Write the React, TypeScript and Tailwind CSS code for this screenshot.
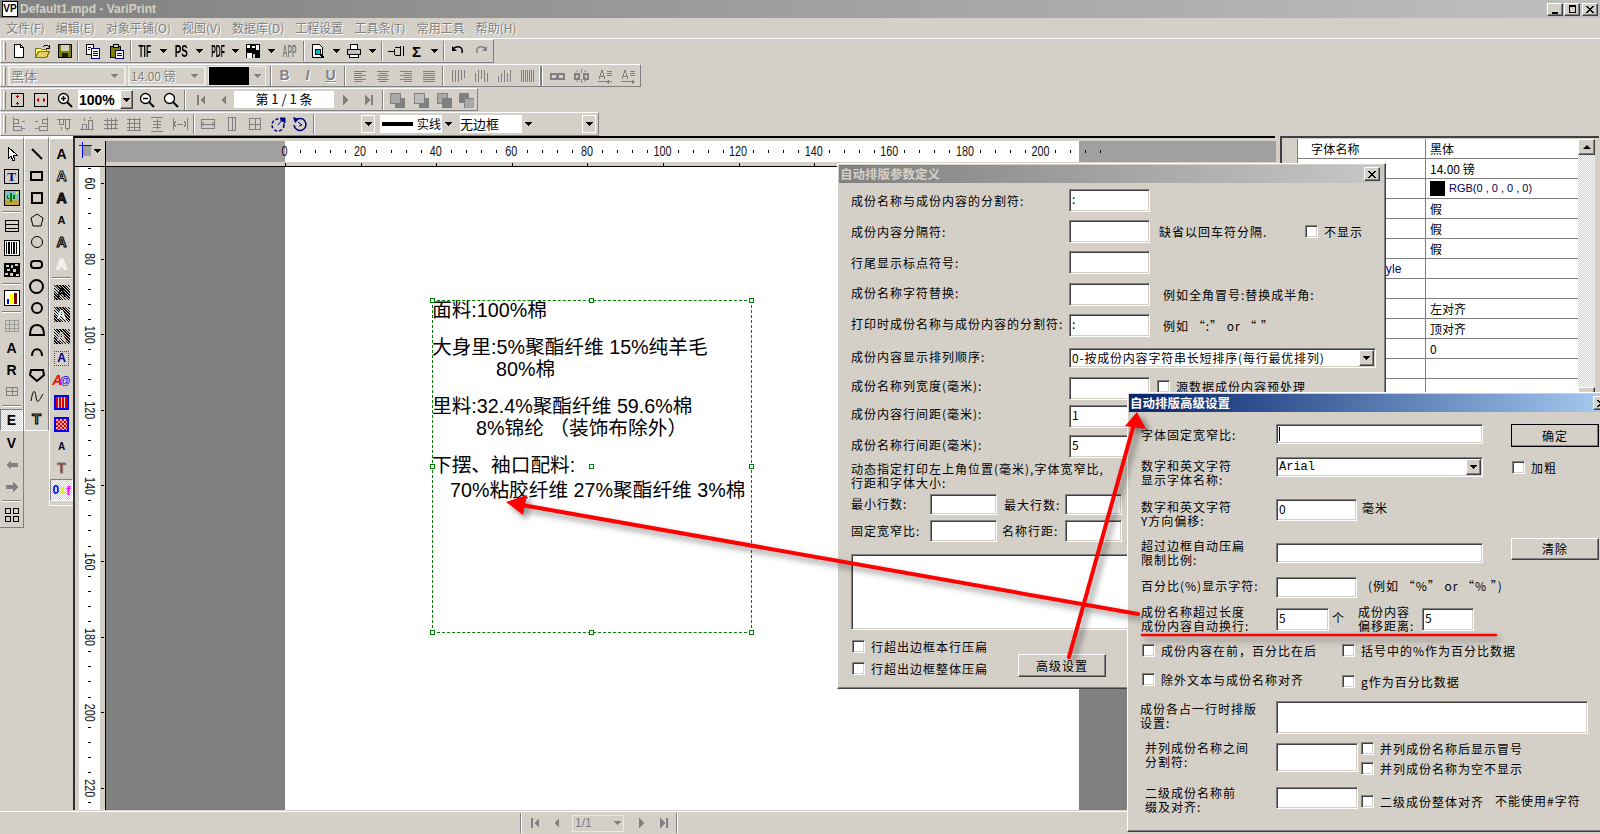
import React from 'react';

const sunken =
  'bg-white border border-t-[#808080] border-l-[#808080] border-r-white border-b-white shadow-[inset_1px_1px_0_#404040,inset_-1px_-1px_0_#d4d0c8]';
const raised =
  'bg-[#d4d0c8] border border-t-white border-l-white border-r-[#404040] border-b-[#404040] shadow-[inset_-1px_-1px_0_#808080]';
const dis = 'text-[#808080] [text-shadow:1px_1px_0_#fff]';
const latin = "[font-family:'Liberation_Sans','Noto_Sans_CJK_SC',sans-serif]";

const Px: React.FC<{ children: React.ReactNode; w?: number; h?: number; crisp?: boolean }> = ({ children, w = 16, h = 16, crisp = true }) => (
  <svg width={w} height={h} viewBox={`0 0 ${w} ${h}`} shapeRendering={crisp ? 'crispEdges' : 'auto'} fill="none">
    {children}
  </svg>
);

const Line: React.FC<{ d: string; c?: string; sw?: number }> = ({ d, c = '#808080', sw = 1 }) => (
  <Px>
    <path d={d} stroke={c} strokeWidth={sw} />
  </Px>
);

const Down: React.FC<{ c?: string }> = ({ c = '#000' }) => (
  <svg width="7" height="4" viewBox="0 0 7 4" shapeRendering="crispEdges">
    <path d="M0 0h7v1h-1v1h-1v1h-1v1h-1v-1h-1v-1h-1v-1h-1z" fill={c} />
  </svg>
);

const Tool: React.FC<{ className?: string; children?: React.ReactNode }> = ({ className = 'w-[23px]', children }) => (
  <div className={`flex h-[20px] shrink-0 items-center justify-center ${className}`}>{children}</div>
);

const Sep: React.FC<{ className?: string }> = ({ className = '' }) => (
  <div className={`h-[20px] w-[2px] shrink-0 border-l border-l-[#808080] border-r border-r-white ${className}`} />
);

const Bar: React.FC<{ className: string; children: React.ReactNode }> = ({ className, children }) => (
  <div className={`flex items-center border-t border-t-white border-b border-b-[#808080] border-r border-r-[#808080] border-l border-l-white ${className}`}>
    <div className="ml-[2px] h-[18px] w-[3px] shrink-0 border-l border-l-white border-r border-r-[#808080] bg-[#d4d0c8]" />
    {children}
  </div>
);

const Narrow: React.FC<{ children: React.ReactNode; c: string }> = ({ children, c }) => (
  <span className={`inline-block text-[17px] leading-none font-bold ${latin} ${c}`}>{children}</span>
);

const Toolbars = () => (
  <div className="h-[98px] shrink-0 border-t border-t-white">
    {/* row 1 */}
    <Bar className="h-[24px] w-[494px]">
      <Tool className="ml-[1px] w-[23px]">
        <Px>
          <path d="M3.5 1.5h6l3 3v10h-9z" fill="#fff" stroke="#000" />
          <path d="M9.5 1.5v3h3" stroke="#000" />
        </Px>
      </Tool>
      <Tool>
        <Px>
          <path d="M1.5 5.5h5l1 1h5v8h-11z" fill="#ffff80" stroke="#808000" />
          <path d="M1.5 14.5l3-6h11l-3 6z" fill="#e8d060" stroke="#808000" />
          <path d="M9 4l2-2h2l2 2M15 2v3h-3" stroke="#000" />
        </Px>
      </Tool>
      <Tool>
        <Px>
          <path d="M1.5 1.5h13v13h-13z" fill="#808000" stroke="#000" />
          <path d="M4 2h8v6h-8z" fill="#d4d0c8" />
          <path d="M5 10h6v4h-6z" fill="#202000" />
        </Px>
      </Tool>
      <Sep className="ml-[1px]" />
      <Tool className="ml-[2px] w-[23px]">
        <Px>
          <path d="M1.5 1.5h7v10h-7z" fill="#fff" stroke="#000" />
          <path d="M6.5 5.5h8v10h-8z" fill="#fff" stroke="#000080" />
          <path d="M8 8h5M8 10h5M8 12h5M3 4h3M3 6h2" stroke="#000080" />
        </Px>
      </Tool>
      <Tool>
        <Px>
          <path d="M2.5 3.5h10v11h-10z" fill="#808000" stroke="#000" />
          <path d="M5 1.5h5v3h-5z" fill="#d4d0c8" stroke="#000" />
          <path d="M7.5 7.5h8v8h-8z" fill="#fff" stroke="#000080" />
          <path d="M9 10h5M9 12h5" stroke="#000080" />
        </Px>
      </Tool>
      <Sep className="ml-[3px]" />
      <Tool className="ml-[1px] w-[23px]"><Narrow c="scale-x-[0.5] text-black">TIF</Narrow></Tool>
      <Tool className="w-[14px]"><Down /></Tool>
      <Tool className="w-[23px]"><Narrow c="scale-x-[0.58] text-black">PS</Narrow></Tool>
      <Tool className="w-[13px]"><Down /></Tool>
      <Tool className="w-[24px]"><Narrow c="scale-x-[0.4] text-black">PDF</Narrow></Tool>
      <Tool className="w-[11px]"><Down /></Tool>
      <Tool className="w-[24px]">
        <Px>
          <path d="M1 1h14v14h-14z" fill="#000" />
          <path d="M2 2h3v3h-3zM7 3h3v2h-3zM11 2h3v5h-3zM2 10h5v5h-5z" fill="#fff" />
          <path d="M8 11h2v4h-2z" fill="#d4d0c8" />
        </Px>
      </Tool>
      <Tool className="w-[12px]"><Down /></Tool>
      <Tool className="w-[24px]"><Narrow c="scale-x-[0.4] text-[#808080]">APP</Narrow></Tool>
      <Sep className="ml-[2px]" />
      <Tool className="ml-[1px] w-[24px]">
        <Px>
          <path d="M2.5 1.5h7l3 3v10h-10z" fill="#fff" stroke="#000" />
          <circle cx="8" cy="9" r="3" fill="#00c0c0" stroke="#000" />
          <path d="M10 11l4 4" stroke="#000" strokeWidth="2" />
        </Px>
      </Tool>
      <Tool className="w-[12px]"><Down /></Tool>
      <Tool className="w-[24px]">
        <Px>
          <path d="M4.5 1.5h7v5h-7z" fill="#fff" stroke="#000" />
          <path d="M1.5 6.5h13v5h-13z" fill="#c0c0c0" stroke="#000" />
          <path d="M3.5 11.5h9v3h-9z" fill="#fff" stroke="#000" />
          <path d="M11 8h2" stroke="#ff0" />
        </Px>
      </Tool>
      <Tool className="w-[12px]"><Down /></Tool>
      <Sep className="ml-[3px]" />
      <Tool className="ml-[1px] w-[23px]">
        <Px>
          <path d="M0 8h6M6.5 5.5v6M6.5 4.5h6v8h-6M12.5 3v10M15 3v10" stroke="#000" />
        </Px>
      </Tool>
      <Tool className="w-[19px]">
        <span className={`text-[15px] font-bold leading-none ${latin}`}>Σ</span>
      </Tool>
      <Tool className="w-[16px]"><Down /></Tool>
      <Sep className="ml-[1px]" />
      <Tool className="ml-[1px] w-[23px]">
        <Px crisp={false}>
          <path d="M4 5c6-3 9 0 8 5" stroke="#000" strokeWidth="1.5" />
          <path d="M2 3v5h5z" fill="#000" />
        </Px>
      </Tool>
      <Tool className="w-[24px]">
        <Px crisp={false}>
          <path d="M12 5c-6-3-9 0-8 5" stroke="#808080" strokeWidth="1.5" />
          <path d="M14 3v5h-5z" fill="#808080" />
        </Px>
      </Tool>
    </Bar>

    {/* row 2 */}
    <Bar className="mt-[1px] h-[23px] w-[641px]">
      <div className={`ml-[2px] flex h-[20px] w-[118px] shrink-0 items-center justify-between border-2 border-[#eceae4] pl-[1px] pr-[6px] text-[13px] ${dis}`}>
        黑体<Down c="#808080" />
      </div>
      <div className={`ml-[2px] flex h-[20px] w-[78px] shrink-0 items-center justify-between border-2 border-[#eceae4] pl-[1px] pr-[6px] text-[12px] ${dis}`}>
        14.00 镑<Down c="#808080" />
      </div>
      <div className="ml-[2px] flex h-[20px] w-[58px] shrink-0 items-center border border-[#eceae4]">
        <div className="h-[18px] w-[40px] bg-black" />
        <div className="flex flex-1 justify-center"><Down c="#808080" /></div>
      </div>
      <Sep className="ml-[4px]" />
      <Tool className="ml-[1px] w-[23px]"><span className={`text-[14px] font-bold ${latin} ${dis}`}>B</span></Tool>
      <Tool><span className={`text-[14px] font-bold italic ${latin} ${dis}`}>I</span></Tool>
      <Tool><span className={`text-[14px] font-bold underline ${latin} ${dis}`}>U</span></Tool>
      <Sep className="ml-[2px]" />
      <Tool className="ml-[2px] w-[23px]"><Line d="M2 3h12M2 5h8M2 7h12M2 9h8M2 11h12M2 13h8" /></Tool>
      <Tool><Line d="M2 3h12M4 5h8M2 7h12M4 9h8M2 11h12M4 13h8" /></Tool>
      <Tool><Line d="M2 3h12M6 5h8M2 7h12M6 9h8M2 11h12M6 13h8" /></Tool>
      <Tool><Line d="M2 3h12M2 5h12M2 7h12M2 9h12M2 11h12M2 13h12" /></Tool>
      <Sep className="ml-[2px]" />
      <Tool className="ml-[2px] w-[23px]"><Line d="M2 2v12M5 2v12M8 2v12M11 2v10M14 2v8" /></Tool>
      <Tool><Line d="M2 5v9M5 2v12M8 2v9M11 2v12M14 5v9" /></Tool>
      <Tool><Line d="M2 8v6M5 5v9M8 2v12M11 5v9M14 2v12" /></Tool>
      <Tool><Line d="M2 2v12M4 2v12M6 2v12M8 2v12M10 2v12M12 2v12M14 2v12" /></Tool>
      <div className="ml-[1px] h-[20px] w-[4px] shrink-0 border-x border-x-white bg-[#808080]" />
      <Tool className="ml-[2px] w-[24px]">
        <Px>
          <path d="M1.5 5.5h6v5h-6zM8.5 5.5h6v5h-6z" stroke="#808080" strokeWidth="2" />
        </Px>
      </Tool>
      <Tool className="w-[24px]">
        <Px>
          <path d="M1.5 5.5h4v5h-4zM10.5 5.5h4v5h-4z" stroke="#808080" strokeWidth="2" />
          <path d="M8 1v4M8 11v4M3 2l2 2M13 2l-2 2M3 14l2-2M13 14l-2-2" stroke="#808080" />
        </Px>
      </Tool>
      <Tool>
        <Px>
          <path d="M2 11l3-9 3 9M3 8h4M10 3h5M10 5h5M10 7h5M1 13h14" stroke="#808080" />
          <path d="M9 14l3-2v4z" fill="#808080" />
        </Px>
      </Tool>
      <Tool className="w-[24px]">
        <Px>
          <path d="M2 11l3-9 3 9M3 8h4M10 3h5M10 5h5M10 7h5M1 13h14" stroke="#808080" />
          <path d="M15 14l-3-2v4z" fill="#808080" />
        </Px>
      </Tool>
    </Bar>

    {/* row 3 */}
    <Bar className="mt-[1px] h-[23px] w-[478px]">
      <Tool className="w-[23px]">
        <Px>
          <path d="M1.5 1.5h12v13h-12z" stroke="#000" />
          <path d="M7.5 3l2 2h-4zM7.5 13l2-2h-4z" fill="#c00000" />
          <path d="M7 5h1v1h-1zM7 10h1v1h-1z" fill="#000" />
        </Px>
      </Tool>
      <Tool className="w-[24px]">
        <Px>
          <path d="M1.5 1.5h13v13h-13z" stroke="#000" />
          <path d="M3 8l3-2v4zM13 8l-3-2v4z" fill="#c00000" />
        </Px>
      </Tool>
      <Tool>
        <Px crisp={false}>
          <circle cx="6.5" cy="6.5" r="5" fill="#fff" stroke="#000" strokeWidth="1.3" />
          <path d="M10 10l5 5" stroke="#000" strokeWidth="2" />
          <path d="M4 6.5h5M6.5 4v5" stroke="#000" strokeWidth="1.5" />
        </Px>
      </Tool>
      <div className="ml-[2px] flex h-[19px] w-[55px] shrink-0 items-center bg-white">
        <span className={`w-[42px] pl-[1px] text-[14px] leading-none font-bold ${latin}`}>100%</span>
        <div className={`flex h-full flex-1 items-center justify-center ${raised}`}><Down /></div>
      </div>
      <Tool className="ml-[2px] w-[24px]">
        <Px crisp={false}>
          <circle cx="6.5" cy="6.5" r="5" fill="#fff" stroke="#000" strokeWidth="1.3" />
          <path d="M10 10l5 5" stroke="#000" strokeWidth="2" />
          <path d="M4 6.5h5" stroke="#000" strokeWidth="1.5" />
        </Px>
      </Tool>
      <Tool>
        <Px crisp={false}>
          <circle cx="6.5" cy="6.5" r="5" fill="#fff" stroke="#000" strokeWidth="1.3" />
          <path d="M10 10l5 5" stroke="#000" strokeWidth="2" />
        </Px>
      </Tool>
      <Sep className="ml-[2px]" />
      <Tool className="ml-[3px] w-[23px]"><Px><path d="M4 3h2v10h-2zM12 3v10l-5-5z" fill="#808080" /></Px></Tool>
      <Tool className="w-[21px]"><Px><path d="M11 3v10l-5-5z" fill="#808080" /></Px></Tool>
      <div className="ml-[1px] flex h-[17px] w-[100px] shrink-0 items-center justify-center bg-white pb-[2px] text-[13px]">第 1 / 1 条</div>
      <Tool className="ml-[1px] w-[22px]"><Px><path d="M5 3v10l5-5z" fill="#808080" /></Px></Tool>
      <Tool><Px><path d="M4 3v10l5-5zM10 3h2v10h-2z" fill="#808080" /></Px></Tool>
      <Sep className="ml-[2px]" />
      <Tool className="ml-[1px] w-[24px]">
        <Px><path d="M6 6h10v10h-10z" fill="#808080" /><path d="M1 1h10v10h-10z" fill="#a8a8a8" stroke="#808080" /></Px>
      </Tool>
      <Tool>
        <Px><path d="M6 6h10v10h-10z" fill="#808080" /><path d="M1 1h10v10h-10z" fill="#bdbdbd" stroke="#808080" /></Px>
      </Tool>
      <Tool className="w-[24px]">
        <Px><path d="M1 1h10v10h-10z" fill="#a8a8a8" stroke="#808080" /><path d="M6 6h10v10h-10z" fill="#808080" /></Px>
      </Tool>
      <Tool className="w-[20px]">
        <Px><path d="M1 1h10v10h-10z" fill="#808080" /><path d="M6 6h10v10h-10z" fill="#a8a8a8" stroke="#808080" /></Px>
      </Tool>
    </Bar>

    {/* row 4 */}
    <Bar className="mt-[1px] h-[24px] w-[599px]">
      <Tool className="w-[24px]"><Line d="M3 1v14M3 3h5v4h-5M3 10h8v4h-8M12 5h3M12 12h3" /></Tool>
      <Tool><Line d="M13 1v14M13 3h-5v4h5M13 10h-8v4h8M1 5h3M1 12h3" /></Tool>
      <Tool className="w-[22px]"><Line d="M1 3h14M3 3v5h4v-5M9 3v9h4v-9M5 11v3M11 13v2" /></Tool>
      <Tool className="w-[24px]"><Line d="M1 13h14M3 13v-5h4v5M9 13v-9h4v9M5 5v-3M11 3v-2" /></Tool>
      <Tool><Line d="M4 2v12M8 2v12M12 2v12M1 4h14M1 8h14M1 12h14" /></Tool>
      <Tool><Line d="M3 2v12M8 2v12M13 2v12M1 3h14M1 7h14M1 11h14M1 14h14" /></Tool>
      <Tool><Line d="M2 1h12M2 15h12M8 3v10M4 5h8M4 8h8M4 11h8" /></Tool>
      <Tool className="w-[24px]"><Line d="M1 2v12M15 2v12M5 8h6M4 5l-2 3 2 3M12 5l2 3-2 3" /></Tool>
      <Sep className="ml-[1px]" />
      <Tool className="ml-[1px] w-[24px]"><Line d="M1.5 3.5h13v9h-13zM1.5 8h13M4 6l-2 2 2 2M12 6l2 2-2 2" /></Tool>
      <Tool><Line d="M4.5 1.5h7v13h-7zM8 1.5v13" /></Tool>
      <Tool className="w-[24px]"><Line d="M2.5 2.5h11v11h-11zM8 2.5v11M2.5 8h11" /></Tool>
      <Tool className="w-[21px]">
        <Px crisp={false}>
          <circle cx="8" cy="9" r="6" stroke="#000080" strokeWidth="1.5" strokeDasharray="3 2" />
          <path d="M8 9l6-7M10 2h5v5z" fill="#000080" stroke="#000080" />
        </Px>
      </Tool>
      <Tool className="w-[24px]">
        <Px crisp={false}>
          <path d="M4 4a6 6 0 1 1-2 5" stroke="#000080" strokeWidth="1.5" />
          <path d="M1 1l6 2-4 4z" fill="#000080" />
          <path d="M6 6l4 3-3 1" stroke="#000080" />
        </Px>
      </Tool>
      <Sep className="ml-[1px]" />
      <div className="ml-[46px] flex h-[18px] w-[14px] shrink-0 items-center justify-center border border-white"><Down /></div>
      <div className="ml-[5px] flex h-[18px] w-[75px] shrink-0 items-center bg-white pl-[2px]">
        <div className="h-[4px] w-[31px] bg-black" />
        <span className="ml-[4px] w-[25px] text-[12px] leading-none">实线</span>
        <div className="flex h-full flex-1 items-center justify-center bg-[#d4d0c8]"><Down /></div>
      </div>
      <div className="ml-[5px] flex h-[18px] w-[75px] shrink-0 items-center bg-white">
        <span className="w-[62px] pb-[2px] text-[13px] leading-none">无边框</span>
        <div className="flex h-full flex-1 items-center justify-center bg-[#d4d0c8]"><Down /></div>
      </div>
      <div className="ml-[47px] flex h-[18px] w-[14px] shrink-0 items-center justify-center border border-white"><Down /></div>
    </Bar>
  </div>
);

const Slot: React.FC<{ className?: string; children?: React.ReactNode }> = ({ className = '', children }) => (
  <div className={`flex h-[22px] w-full items-center justify-center ${className}`}>{children}</div>
);

const HSep = () => <div className="mx-[2px] my-[2px] h-[2px] border-t border-t-[#808080] border-b border-b-white" />;

const Big: React.FC<{ children: React.ReactNode; c?: string }> = ({ children, c = '' }) => (
  <span className={`text-[14px] leading-none font-bold ${latin} ${c}`}>{children}</span>
);

const Box: React.FC<{ children: React.ReactNode; c?: string }> = ({ children, c = 'border-black' }) => (
  <div className={`flex h-[15px] w-[15px] items-center justify-center overflow-hidden border-2 ${c}`}>{children}</div>
);

const StripeA: React.FC<{ c: string }> = ({ c }) => (
  <div className="flex h-[15px] w-[16px] items-center justify-center bg-[repeating-linear-gradient(45deg,#000_0,#000_1px,#d4d0c8_1px,#d4d0c8_2px)]">
    <span className={`text-[13px] leading-none font-bold ${latin} ${c}`}>A</span>
  </div>
);

const LeftTools = () => (
  <div className="flex w-[74px] shrink-0 items-start">
    <div className="h-[392px] w-[24px] shrink-0 border-t-[3px] border-t-white border-r border-r-[#808080] border-b border-b-[#808080] pt-[4px]">
      <Slot>
        <Px><path d="M4 1v12l3-3 2 5 2-1-2-5h4z" fill="#fff" stroke="#000" /></Px>
      </Slot>
      <Slot>
        <div className="flex h-[15px] w-[15px] items-center justify-center border border-black bg-[#d4d0c8]">
          <span className="text-[13px] leading-none font-bold text-[#000080] [font-family:'Liberation_Serif',serif]">T</span>
        </div>
      </Slot>
      <Slot>
        <Px>
          <path d="M0 0h16v16h-16z" fill="#000" />
          <path d="M1 1h14v14h-14z" fill="#80c0c0" />
          <path d="M1 10h14v5h-14z" fill="#c0a040" />
          <path d="M6 3h2v9h-2zM3 5h1v3h3v1h-4zM9 5h2v4h-2z" fill="#008000" />
          <path d="M12 2h2v2h-2z" fill="#ff0" />
        </Px>
      </Slot>
      <HSep />
      <Slot><Px><path d="M1.5 2.5h13v11h-13zM1.5 6h13M1.5 10h13" stroke="#000" /></Px></Slot>
      <Slot>
        <Px>
          <path d="M.5.5h15v15h-15z" fill="#fff" stroke="#000" />
          <path d="M2 2h1v12h-1zM4 2h2v12h-2zM7 2h1v12h-1zM9 2h2v12h-2zM12 2h1v12h-1z" fill="#000" />
        </Px>
      </Slot>
      <Slot>
        <Px>
          <path d="M0 1h16v14h-16z" fill="#000" />
          <path d="M2 3h3v2h-3zM7 3h2v3h-2zM11 2h3v2h-3zM3 7h3v2h-3zM9 7h3v3h-3zM1 11h3v2h-3zM6 11h3v3h-3zM12 12h3v2h-3z" fill="#d4d0c8" />
        </Px>
      </Slot>
      <HSep />
      <Slot>
        <Px>
          <path d="M.5.5h15v15h-15z" fill="#fff" stroke="#000" />
          <path d="M3 9h2v5h-2z" fill="#0000ff" />
          <path d="M6 4h3v10h-3z" fill="#ff0" />
          <path d="M10 3h3v11h-3z" fill="#800000" />
        </Px>
      </Slot>
      <HSep />
      <Slot><Px><path d="M1.5 2.5h13v11h-13zM5.5 2.5v11M10 2.5v11M1.5 6h13M1.5 10h13" stroke="#9a9a9a" /></Px></Slot>
      <Slot><Big>A</Big></Slot>
      <Slot><Big>R</Big></Slot>
      <Slot><Px><path d="M2.5 3.5h11v8h-11zM2.5 7.5h11M8 3.5v8" stroke="#808080" /></Px></Slot>
      <HSep />
      <Slot className="my-[1px] border border-t-[#808080] border-l-[#808080] border-r-white border-b-white bg-[repeating-conic-gradient(#fff_0_25%,#d4d0c8_0_50%)] bg-[length:2px_2px]">
        <Big>E</Big>
      </Slot>
      <Slot><Big>V</Big></Slot>
      <Slot><Px><path d="M2 8l5-5v3h7v4h-7v3z" fill="#808080" /></Px></Slot>
      <Slot><Px><path d="M14 8l-5-5v3h-7v4h7v3z" fill="#808080" /></Px></Slot>
      <HSep />
      <Slot><Px><path d="M1.5 1.5h5v5h-5zM9.5 1.5h5v5h-5zM1.5 9.5h5v5h-5zM9.5 9.5h5v5h-5z" stroke="#000" /></Px></Slot>
    </div>
    <div className="h-[295px] w-[25px] shrink-0 border-t-[3px] border-t-white border-r border-r-[#808080] border-b border-b-white border-l border-l-white pt-[4px]">
      <Slot><Px crisp={false}><path d="M3 3l10 10" stroke="#000" strokeWidth="2" /></Px></Slot>
      <Slot><div className="h-[10px] w-[13px] border-2 border-black" /></Slot>
      <Slot><div className="h-[12px] w-[12px] border-2 border-black" /></Slot>
      <Slot><Px crisp={false}><path d="M8 2l6 4-2 8h-8l-2-8z" stroke="#000" /></Px></Slot>
      <Slot><div className="h-[12px] w-[12px] rounded-full border border-black" /></Slot>
      <Slot><div className="h-[9px] w-[13px] rounded-[4px] border-2 border-black" /></Slot>
      <Slot><div className="h-[15px] w-[15px] rounded-full border-2 border-black" /></Slot>
      <Slot><div className="h-[12px] w-[12px] rounded-full border-2 border-black" /></Slot>
      <Slot><Px crisp={false}><path d="M1 13h14c0-8-3-10-7-10s-7 2-7 10z" stroke="#000" strokeWidth="2" /></Px></Slot>
      <Slot><Px crisp={false}><path d="M3 12c0-9 10-9 10 0" stroke="#000" strokeWidth="2" /></Px></Slot>
      <Slot><Px crisp={false}><path d="M2 4h12l1 5-7 6-7-6z" stroke="#000" strokeWidth="2" /></Px></Slot>
      <Slot><Px crisp={false}><path d="M2 13c2-12 4-12 5-4s3 4 7-3" stroke="#000" /></Px></Slot>
      <Slot><span className={`text-[15px] leading-none font-bold text-[#808080] [-webkit-text-stroke:1px_#000] ${latin}`}>T</span></Slot>
    </div>
    <div className="h-[370px] w-[25px] shrink-0 border-t-[3px] border-t-white border-r border-r-white border-b border-b-white border-l border-l-white pt-[4px]">
      <Slot><Big>A</Big></Slot>
      <Slot><Big c="text-white [-webkit-text-stroke:1px_#000]">A</Big></Slot>
      <Slot><Big c="text-[#333] [-webkit-text-stroke:1px_#000]">A</Big></Slot>
      <Slot><span className={`text-[11px] font-bold ${latin}`}>A</span></Slot>
      <Slot><Big c="text-[#aaa] [-webkit-text-stroke:1px_#000]">A</Big></Slot>
      <Slot><Big c="text-[#d4d0c8] [-webkit-text-stroke:1px_#fff]">A</Big></Slot>
      <HSep />
      <Slot><StripeA c="text-black" /></Slot>
      <Slot><StripeA c="text-white" /></Slot>
      <Slot><StripeA c="text-[#d4d0c8]" /></Slot>
      <Slot>
        <div className="flex h-[15px] w-[15px] items-center justify-center border border-dotted border-[#c000c0]">
          <span className={`text-[12px] leading-none font-bold text-[#000080] ${latin}`}>A</span>
        </div>
      </Slot>
      <Slot>
        <span className={`text-[14px] leading-none font-bold italic text-[#ff0000] ${latin}`}>A</span>
        <span className={`-ml-[3px] text-[11px] leading-none text-[#0000ff] ${latin}`}>@</span>
      </Slot>
      <Slot>
        <Box c="border-[#0000ff]">
          <div className="h-full w-full bg-[repeating-linear-gradient(90deg,#e00000_0,#e00000_2px,#d4d0c8_2px,#d4d0c8_3px)]" />
        </Box>
      </Slot>
      <Slot>
        <Box c="border-[#0000ff]">
          <div className="h-full w-full bg-[repeating-conic-gradient(#e00000_0_25%,#ffb0b0_0_50%)] bg-[length:4px_4px]" />
        </Box>
      </Slot>
      <Slot><span className={`text-[10px] font-bold text-[#000040] ${latin}`}>A</span></Slot>
      <Slot><Big c="text-[#e00000] [-webkit-text-stroke:1px_#808080]">T</Big></Slot>
      <Slot className="border border-t-[#808080] border-l-[#808080] border-r-white border-b-white bg-[repeating-conic-gradient(#fff_0_25%,#d4d0c8_0_50%)] bg-[length:2px_2px]">
        <span className={`text-[12px] leading-none font-bold text-[#0000ff] ${latin}`}>0</span>
        <span className={`ml-[1px] text-[9px] leading-none font-bold text-[#e0e000] ${latin}`}>1</span>
        <span className={`ml-[1px] text-[13px] leading-none font-bold text-[#ff00ff] ${latin}`}>f</span>
      </Slot>
    </div>
  </div>
);

const ticksH = Array.from({ length: 55 }, (_, i) => i).filter((i) => i % 5 !== 0);
const labelsH = [0, 20, 40, 60, 80, 100, 120, 140, 160, 180, 200];
const labelsV = [60, 80, 100, 120, 140, 160, 180, 200, 220];

const RulerH = () => (
  <svg width="1170" height="25" className="block" shapeRendering="auto">
    <rect width="1170" height="21" fill="#a0a0a0" />
    <rect x="179" width="794" height="21" fill="#fff" />
    {ticksH.map((i) => (
      <rect key={i} x={Math.round(179 + i * 15.1)} y="9" width="1" height="3" fill="#000" />
    ))}
    {labelsH.map((n, i) => (
      <g key={n}>
        <rect x={Math.round(179 + i * 75.6)} y="22" width="1" height="3" fill="#000" />
        <text x={178.5 + i * 75.6} y="15" fontSize="14" textAnchor="middle" textLength={String(n).length * 6} lengthAdjust="spacingAndGlyphs" fontFamily="'Liberation Sans', sans-serif" fill="#111">
          {n}
        </text>
      </g>
    ))}
  </svg>
);

const RulerV = () => (
  <svg width="30" height="643" className="block shrink-0">
    <rect x="4" width="21" height="643" fill="#fff" />
    {Array.from({ length: 43 }, (_, i) => i).map((i) => (
      <rect key={i} x="13" y={Math.round(1 + i * 15.1)} width="3" height="1" fill="#000" />
    ))}
    {labelsV.map((n, i) => (
      <g key={n}>
        <rect x="26" y={Math.round(16 + i * 75.6)} width="3" height="1" fill="#000" />
        <rect x="11" y={Math.round(8 + i * 75.6)} width="8" height="17" fill="#fff" />
        <text transform={`translate(10 ${16.5 + i * 75.6}) rotate(90)`} fontSize="14" textAnchor="middle" textLength={String(n).length * 6} lengthAdjust="spacingAndGlyphs" fontFamily="'Liberation Sans', sans-serif" fill="#111">
          {n}
        </text>
      </g>
    ))}
  </svg>
);

const Handle: React.FC<{ className: string }> = ({ className }) => (
  <div className={`absolute h-[5px] w-[5px] border border-[#008000] bg-white ${className}`} />
);

const TextFrame = () => (
  <div className={`absolute top-[133px] left-[147px] h-[333px] w-[320px] border border-dashed border-[#008000] text-[19.7px] leading-[22px] text-black ${latin}`}>
    <Handle className="-top-[3px] -left-[3px]" />
    <Handle className="-top-[3px] left-[156px]" />
    <Handle className="-top-[3px] -right-[3px]" />
    <Handle className="top-[163px] -left-[3px]" />
    <Handle className="top-[163px] left-[156px]" />
    <Handle className="top-[163px] -right-[3px]" />
    <Handle className="-bottom-[3px] -left-[3px]" />
    <Handle className="-bottom-[3px] left-[156px]" />
    <Handle className="-bottom-[3px] -right-[3px]" />
    <div className="-mt-[2px] -ml-[1px] whitespace-nowrap">
      <p>面料:100%棉</p>
      <p className="mt-[15px]">大身里:5%聚酯纤维 15%纯羊毛</p>
      <p className="pl-[64px]">80%棉</p>
      <p className="mt-[15px]">里料:32.4%聚酯纤维 59.6%棉</p>
      <p className="pl-[44px]">8%锦纶 （装饰布除外）</p>
      <p className="mt-[15px]">下摆、袖口配料:</p>
      <p className="mt-[3px] pl-[18px]">70%粘胶纤维 27%聚酯纤维 3%棉</p>
    </div>
  </div>
);

const propRows: { name?: string; value?: React.ReactNode }[] = [
  { name: '字体名称', value: '黑体' },
  { value: '14.00 镑' },
  {
    value: (
      <span className="flex items-center gap-[4px]">
        <span className="h-[15px] w-[15px] bg-black" />
        <span className={`text-[11px] text-[#000050] ${latin}`}>RGB(0 , 0 , 0 , 0)</span>
      </span>
    ),
  },
  { value: '假' },
  { value: '假' },
  { value: '假' },
  { name: 'Style' },
  {},
  { value: '左对齐' },
  { value: '顶对齐' },
  { value: '0' },
  {},
  {},
];

const PropPanel = () => (
  <div className="ml-[5px] flex h-[270px] w-[319px] shrink-0 border-t-[2px] border-t-[#404040] border-l-[2px] border-l-[#404040] pt-[1px] pl-[2px]">
    <div className="w-[14px] shrink-0 border-r border-r-[#808080]" />
    <div className="w-[280px] shrink-0 bg-white">
      {propRows.map((r, i) => (
        <div key={i} className="flex h-[20px] border-b border-b-[#808080]">
          <div className={`w-[128px] shrink-0 border-r border-r-[#808080] pt-[1px] text-[12px] tracking-[0.2px] ${i === 6 ? `pl-[76px] text-[#000080] ${latin}` : 'pl-[13px]'}`}>{r.name}</div>
          <div className="flex flex-1 items-center pl-[4px] text-[12px]">{r.value}</div>
        </div>
      ))}
    </div>
    <div className="flex w-[17px] shrink-0 flex-col bg-[repeating-conic-gradient(#fff_0_25%,#d4d0c8_0_50%)] bg-[length:2px_2px] pb-[3px]">
      <div className={`flex h-[16px] items-center justify-center ${raised}`}>
        <span className="h-0 w-0 border-x-[4px] border-b-[4px] border-x-transparent border-b-black" />
      </div>
      <div className={`mt-auto flex h-[16px] items-center justify-center ${raised}`}>
        <Down />
      </div>
    </div>
  </div>
);

const Check = () => <div className={`h-[13px] w-[13px] shrink-0 ${sunken}`} />;

const Field: React.FC<{ className: string; children?: React.ReactNode }> = ({ className, children }) => (
  <div className={`shrink-0 overflow-hidden pl-[2px] text-[12px] leading-[17px] tracking-normal ${sunken} ${className}`}>{children}</div>
);

const CloseBtn: React.FC<{ className: string }> = ({ className }) => (
  <div className={`flex items-center justify-center ${raised} ${className}`}>
    <svg width="8" height="7" viewBox="0 0 8 7" shapeRendering="crispEdges">
      <path d="M0 0h2v1h1v1h2v-1h1v-1h2v1h-1v1h-1v1h-1v1h1v1h1v1h1v1h-2v-1h-1v-1h-2v1h-1v1h-2v-1h1v-1h1v-1h1v-1h-1v-1h-1v-1h-1z" fill="#000" />
    </svg>
  </div>
);

const Row: React.FC<{ className: string; children: React.ReactNode }> = ({ className, children }) => (
  <div className={`flex items-center ${className}`}>{children}</div>
);

const CheckLabel: React.FC<{ children: React.ReactNode; className?: string }> = ({ children, className = '' }) => (
  <div className={`flex items-center gap-[6px] ${className}`}>
    <Check />
    <span className="whitespace-nowrap leading-[13px]">{children}</span>
  </div>
);

const DialogBody = () => (
  <div className="pl-[13px]">
    <Row className="mt-[6px]"><span className="w-[218px]">成份名称与成份内容的分割符:</span><Field className="h-[23px] w-[81px]">:</Field></Row>
    <Row className="mt-[8px]">
      <span className="w-[218px]">成份内容分隔符:</span>
      <Field className="h-[23px] w-[81px]" />
      <span className="ml-[9px] w-[146px] whitespace-nowrap">缺省以回车符分隔.</span>
      <CheckLabel>不显示</CheckLabel>
    </Row>
    <Row className="mt-[8px]"><span className="w-[218px]">行尾显示标点符号:</span><Field className="h-[23px] w-[81px]" /></Row>
    <Row className="mt-[9px]">
      <span className="w-[218px] pb-[4px]">成份名称字符替换:</span>
      <Field className="h-[23px] w-[81px]" />
      <span className="ml-[13px] whitespace-nowrap">例如全角冒号:替换成半角:</span>
    </Row>
    <Row className="mt-[8px]">
      <span className="w-[218px] pb-[4px] whitespace-nowrap">打印时成份名称与成份内容的分割符:</span>
      <Field className="h-[23px] w-[81px]">:</Field>
      <span className="ml-[13px] whitespace-nowrap">例如 “:” or “ ”</span>
    </Row>
    <Row className="mt-[11px]">
      <span className="w-[218px] pb-[2px]">成份内容显示排列顺序:</span>
      <div className={`flex h-[20px] w-[307px] shrink-0 items-center justify-between pl-[2px] text-[12px] tracking-[0.8px] whitespace-nowrap ${sunken}`}>
        0-按成份内容字符串长短排序(每行最优排列)
        <div className={`mr-[1px] flex h-[16px] w-[15px] shrink-0 items-center justify-center ${raised}`}><Down /></div>
      </div>
    </Row>
    <Row className="mt-[9px]">
      <span className="w-[218px] pb-[5px]">成份名称列宽度(毫米):</span>
      <Field className="h-[23px] w-[81px]" />
      <CheckLabel className="ml-[7px] pb-[4px]">源数据成份内容预处理</CheckLabel>
    </Row>
    <Row className="mt-[5px]"><span className="w-[218px] pb-[5px]">成份内容行间距(毫米):</span><Field className="h-[23px] w-[81px]">1</Field></Row>
    <Row className="mt-[7px]"><span className="w-[218px] pb-[4px]">成份名称行间距(毫米):</span><Field className="h-[23px] w-[81px]">5</Field></Row>
    <p className="mt-[4px] leading-[14px] whitespace-nowrap">
      动态指定打印左上角位置(毫米),字体宽窄比,
      <br />
      行距和字体大小:
    </p>
    <Row className="mt-[4px]">
      <span className="w-[79px] pb-[2px]">最小行数:</span>
      <Field className="h-[21px] w-[67px]" />
      <span className="ml-[7px] w-[61px] whitespace-nowrap">最大行数:</span>
      <Field className="h-[21px] w-[57px]" />
    </Row>
    <Row className="mt-[5px]">
      <span className="w-[79px]">固定宽窄比:</span>
      <Field className="h-[22px] w-[67px]" />
      <span className="ml-[5px] w-[63px] whitespace-nowrap">名称行距:</span>
      <Field className="h-[22px] w-[57px]" />
    </Row>
    <div className={`mt-[12px] h-[76px] w-[520px] ${sunken}`} />
    <div className="mt-[10px] flex items-end">
      <div className="flex w-[167px] flex-col gap-[9px] pl-[1px]">
        <CheckLabel>行超出边框本行压扁</CheckLabel>
        <CheckLabel>行超出边框整体压扁</CheckLabel>
      </div>
      <div className={`-mb-[2px] flex h-[23px] w-[88px] items-center justify-center ${raised}`}>高级设置</div>
    </div>
  </div>
);

const AdvancedBody = () => (
  <div className="pl-[13px]">
    <div className="mt-[12px] flex h-[23px] items-start">
      <span className="mt-[3px] w-[135px]">字体固定宽窄比:</span>
      <Field className="flex h-[20px] w-[207px] items-center"><span className="h-[14px] w-[1px] bg-black" /></Field>
      <div className={`ml-[28px] flex h-[23px] w-[88px] shrink-0 items-center justify-center outline outline-black -outline-offset-1 ${raised}`}>确定</div>
    </div>
    <div className="mt-[10px] flex h-[30px] items-start">
      <span className="mt-[2px] w-[135px] leading-[14px]">数字和英文字符<br />显示字体名称:</span>
      <div className={`flex h-[20px] w-[207px] shrink-0 items-center justify-between pl-[2px] text-[12px] tracking-normal [font-family:'Liberation_Mono',monospace] ${sunken}`}>
        Arial
        <div className={`mr-[1px] flex h-[16px] w-[15px] items-center justify-center ${raised}`}><Down /></div>
      </div>
      <CheckLabel className="mt-[4px] ml-[29px]">加粗</CheckLabel>
    </div>
    <div className="mt-[12px] flex h-[30px] items-start">
      <span className="mt-[1px] w-[135px] leading-[14px]">数字和英文字符<br />Y方向偏移:</span>
      <Field className="h-[22px] w-[81px]">0</Field>
      <span className="mt-[1px] ml-[5px]">毫米</span>
    </div>
    <div className="mt-[9px] flex h-[30px] items-start">
      <span className="mt-[1px] w-[135px] leading-[14px]">超过边框自动压扁<br />限制比例:</span>
      <Field className="mt-[5px] h-[20px] w-[207px]" />
      <div className={`ml-[28px] flex h-[22px] w-[88px] shrink-0 items-center justify-center ${raised}`}>清除</div>
    </div>
    <div className="mt-[9px] flex h-[21px] items-center">
      <span className="w-[135px] pb-[3px]">百分比(%)显示字符:</span>
      <Field className="h-[21px] w-[81px]" />
      <span className="ml-[11px] pb-[3px] whitespace-nowrap">(例如 “%” or “% ”)</span>
    </div>
    <div className="mt-[7px] flex h-[28px] items-start">
      <span className="w-[135px] leading-[14px] whitespace-nowrap">成份名称超过长度<br />成份内容自动换行:</span>
      <Field className="mt-[3px] h-[23px] w-[53px]">5</Field>
      <span className="mt-[5px] ml-[3px] w-[13px]">个</span>
      <span className="ml-[13px] w-[64px] leading-[14px] whitespace-nowrap">成份内容<br />偏移距离:</span>
      <Field className="mt-[3px] h-[23px] w-[52px]">5</Field>
    </div>
    <div className="mt-[11px] flex pl-[1px]">
      <CheckLabel className="w-[200px]">成份内容在前，百分比在后</CheckLabel>
      <CheckLabel>括号中的%作为百分比数据</CheckLabel>
    </div>
    <div className="mt-[16px] flex h-[15px] items-start pl-[1px]">
      <CheckLabel className="w-[200px]">除外文本与成份名称对齐</CheckLabel>
      <CheckLabel className="mt-[2px]">g作为百分比数据</CheckLabel>
    </div>
    <div className="mt-[13px] flex h-[33px] items-start">
      <span className="mt-[1px] -ml-[1px] w-[136px] leading-[14px]">成份各占一行时排版<br />设置:</span>
      <div className={`h-[33px] w-[312px] shrink-0 ${sunken}`} />
    </div>
    <div className="mt-[7px] flex h-[35px] items-start">
      <span className="w-[135px] pl-[4px] leading-[14px]">并列成份名称之间<br />分割符:</span>
      <Field className="mt-[2px] h-[29px] w-[82px]" />
      <div className="mt-[1px] ml-[3px] flex flex-col gap-[7px]">
        <CheckLabel>并列成份名称后显示冒号</CheckLabel>
        <CheckLabel>并列成份名称为空不显示</CheckLabel>
      </div>
    </div>
    <div className="mt-[10px] flex h-[28px] items-start">
      <span className="w-[135px] pl-[4px] leading-[14px]">二级成份名称前<br />缀及对齐:</span>
      <Field className="mt-[1px] h-[22px] w-[82px]" />
      <CheckLabel className="mt-[9px] ml-[3px] w-[134px]">二级成份整体对齐</CheckLabel>
      <span className="mt-[7px] whitespace-nowrap">不能使用#字符</span>
    </div>
  </div>
);

const Arrows = () => (
  <svg width="1600" height="834" className="pointer-events-none absolute top-0 left-0 [filter:drop-shadow(4px_4px_3px_rgba(0,0,0,0.45))]">
    <g fill="#ff0000">
      <path d="M506 502L527 495L523 515Z" />
      <path d="M1137 412L1146 429L1125 426Z" />
    </g>
    <g stroke="#ff0000" fill="none" strokeLinecap="round">
      <path d="M522 505L1138 614" strokeWidth="4" />
      <path d="M1069 657L1134 424" strokeWidth="4" />
      <path d="M1142 635L1496 635" strokeWidth="2.5" />
    </g>
  </svg>
);

const App: React.FC = () => {
  return (
    <div className="relative flex h-[834px] w-[1600px] flex-col overflow-hidden bg-[#d4d0c8] text-black [font-family:'Noto_Sans_CJK_SC','Liberation_Sans',sans-serif]">
      {/* title bar */}
      <div className="flex h-[18px] shrink-0 items-center bg-gradient-to-r from-[#808080] to-[#c0c0c0] pl-[2px]">
        <div className={`flex h-[16px] w-[16px] items-center justify-center border border-black bg-white text-[10px] leading-none font-bold ${latin}`}>VP</div>
        <span className={`ml-[2px] text-[12px] font-bold text-[#d4d0c8] ${latin}`}>Default1.mpd - VariPrint</span>
        <div className="ml-auto mr-[2px] flex gap-[1px]">
          <div className={`flex h-[13px] w-[16px] items-end justify-center pb-[1px] ${raised}`}><div className="h-[2px] w-[6px] bg-black" /></div>
          <div className={`mr-[1px] flex h-[13px] w-[16px] items-center justify-center ${raised}`}><div className="h-[8px] w-[7px] border border-t-2 border-black" /></div>
          <CloseBtn className="h-[13px] w-[16px]" />
        </div>
      </div>

      {/* menu */}
      <div className={`flex h-[20px] shrink-0 items-center gap-[11px] pl-[6px] text-[12px] whitespace-nowrap ${dis}`}>
        <span>文件(F)</span>
        <span>编辑(E)</span>
        <span>对象平铺(O)</span>
        <span>视图(V)</span>
        <span>数据库(D)</span>
        <span>工程设置</span>
        <span>工具条(T)</span>
        <span>常用工具</span>
        <span>帮助(H)</span>
      </div>

      <Toolbars />

      <div className="flex h-[675px] shrink-0 items-start">
        <LeftTools />
        <div className="-ml-[1px] h-[674px] w-[1202px] shrink-0 border-t-[2px] border-t-black border-l-[2px] border-l-[#303030]">
          <div className="flex h-[28px] pt-[3px]">
            <div className="flex w-[30px] shrink-0 items-center justify-center gap-[1px] pb-[5px]">
              <Px w={14} h={18}>
                <path d="M3 3h9v11h-9z" fill="#a0a0a0" />
                <path d="M0 3h13M3 0v16" stroke="#0000ff" />
              </Px>
              <Down />
            </div>
            <div className="border-l border-l-black"><RulerH /></div>
          </div>
          <div className="flex h-[644px] border-t border-t-black">
            <RulerV />
            <div className="relative flex-1 border-l border-l-black bg-[#808080]">
              <div className="absolute top-0 left-[179px] h-full w-[794px] bg-white"><TextFrame /></div>
            </div>
          </div>
        </div>
        <PropPanel />
      </div>

      {/* status bar */}
      <div className="flex h-[23px] shrink-0 items-center border-t border-t-white pl-[520px] text-[#808080]">
        <Sep />
        <Tool className="ml-[3px] w-[20px]"><Px><path d="M4 3h2v10h-2zM12 3v10l-5-5z" fill="#808080" /></Px></Tool>
        <Tool className="w-[21px]"><Px><path d="M11 3v10l-5-5z" fill="#808080" /></Px></Tool>
        <div className={`ml-[6px] flex h-[17px] w-[52px] items-center justify-between border border-[#eceae4] px-[2px] text-[12px] ${latin}`}>1/1<Down c="#808080" /></div>
        <Tool className="ml-[8px] w-[20px]"><Px><path d="M5 3v10l5-5z" fill="#808080" /></Px></Tool>
        <Tool className="w-[24px]"><Px><path d="M4 3v10l5-5zM10 3h2v10h-2z" fill="#808080" /></Px></Tool>
        <Sep />
      </div>

      {/* dialog: parameters */}
      <div className={`absolute top-[163px] left-[837px] h-[526px] w-[549px] text-[12px] leading-[16px] tracking-[1px] ${raised}`}>
        <div className="mx-[1px] mt-[1px] flex h-[18px] items-center justify-between bg-gradient-to-r from-[#808080] to-[#c8c8c8] pl-[1px] pr-[4px]">
          <span className="text-[12.5px] tracking-normal font-bold text-[#d4d0c8]">自动排版参数定义</span>
          <CloseBtn className="h-[14px] w-[16px]" />
        </div>
        <DialogBody />
      </div>

      {/* dialog: advanced settings */}
      <div className={`absolute top-[392px] left-[1127px] h-[440px] w-[480px] text-[12px] leading-[16px] tracking-[1px] ${raised}`}>
        <div className="mx-[1px] mt-[1px] flex h-[18px] items-center justify-between bg-gradient-to-r from-[#0a246a] to-[#a6caf0] pl-[1px]">
          <span className="text-[12.5px] tracking-normal font-bold text-white">自动排版高级设置</span>
          <CloseBtn className="-mr-[4px] h-[14px] w-[16px]" />
        </div>
        <AdvancedBody />
      </div>

      <Arrows />
    </div>
  );
};

export default App;
